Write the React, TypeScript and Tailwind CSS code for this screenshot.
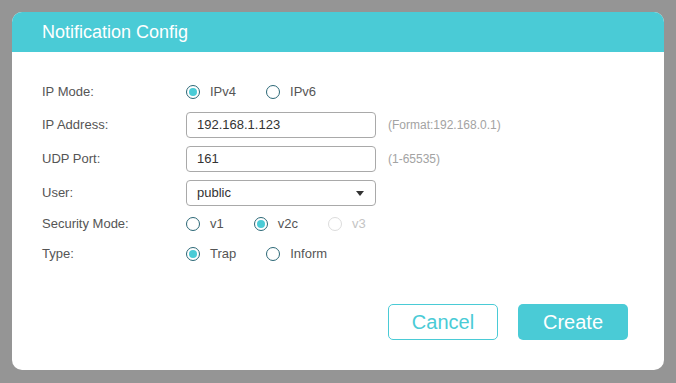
import React from 'react';

type Opt = { label: string; checked?: boolean; disabled?: boolean };

const Radio: React.FC<Opt> = ({ label, checked = false, disabled = false }) => (
  <label className="flex items-center mr-[30px]">
    <span
      className={`flex items-center justify-center w-[14px] h-[14px] rounded-full border-[1.5px] ${
        disabled ? 'border-[#dcdcdc]' : 'border-[#2b6776]'
      }`}
    >
      {checked && <span className="w-[8px] h-[8px] rounded-full bg-[#4acbd6]" />}
    </span>
    <span className={`ml-[10px] text-[13px] ${disabled ? 'text-[#c4c4c4]' : 'text-[#555]'}`}>{label}</span>
  </label>
);

const Row: React.FC<{ label: string; h: string; children: React.ReactNode }> = ({ label, h, children }) => (
  <div className={`flex items-center ${h}`}>
    <div className="w-[144px] text-[13px] text-[#555]">{label}</div>
    <div className="flex items-center">{children}</div>
  </div>
);

const TextBox: React.FC<{ value: string }> = ({ value }) => (
  <div className="w-[190px] h-[26px] border border-[#a9a9a9] rounded-[4px] px-[10px] flex items-center text-[13px] text-[#333]">
    {value}
  </div>
);

export default function App() {
  return (
    <div
      className="w-[676px] h-[383px] bg-[#959595] p-[12px]"
      style={{ fontFamily: '"Liberation Sans", Arial, sans-serif' }}
    >
      <div className="w-[652px] h-[358px] bg-white rounded-[10px] overflow-hidden flex flex-col">
        {/* Header */}
        <div className="h-[40px] bg-[#4acbd6] px-[30px] flex items-center text-white text-[18px]">
          Notification Config
        </div>

        {/* Form */}
        <div className="px-[30px] pt-[24px]">
          <Row label="IP Mode:" h="h-[32px]">
            <Radio label="IPv4" checked />
            <Radio label="IPv6" />
          </Row>
          <Row label="IP Address:" h="h-[34px]">
            <TextBox value="192.168.1.123" />
            <span className="ml-[12px] text-[12px] text-[#a3a3a3]">(Format:192.168.0.1)</span>
          </Row>
          <Row label="UDP Port:" h="h-[34px]">
            <TextBox value="161" />
            <span className="ml-[12px] text-[12px] text-[#a3a3a3]">(1-65535)</span>
          </Row>
          <Row label="User:" h="h-[34px]">
            <div className="w-[190px] h-[26px] border border-[#a9a9a9] rounded-[4px] pl-[10px] pr-[11px] flex items-center justify-between text-[13px] text-[#333]">
              <span>public</span>
              <svg width="8" height="5" viewBox="0 0 8 5">
                <path d="M0 0h8L4 5z" fill="#333" />
              </svg>
            </div>
          </Row>
          <Row label="Security Mode:" h="h-[28px]">
            <Radio label="v1" />
            <Radio label="v2c" checked />
            <Radio label="v3" disabled />
          </Row>
          <Row label="Type:" h="h-[32px]">
            <Radio label="Trap" checked />
            <Radio label="Inform" />
          </Row>
        </div>

        {/* Actions */}
        <div className="flex justify-end gap-[20px] pr-[36px] mt-[34px]">
          <button className="w-[110px] h-[36px] border border-[#4acbd6] rounded-[5px] text-[#4acbd6] text-[20px]">
            Cancel
          </button>
          <button className="w-[110px] h-[36px] bg-[#4acbd6] rounded-[5px] text-white text-[20px]">
            Create
          </button>
        </div>
      </div>
    </div>
  );
}
